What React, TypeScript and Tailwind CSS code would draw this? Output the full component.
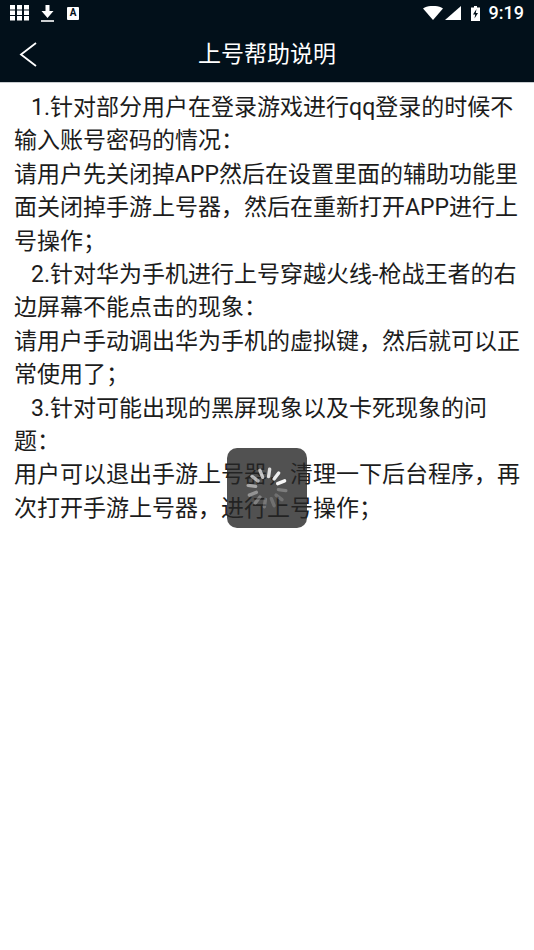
import React from 'react';

const paragraphs = [
  '\u00a0\u00a0\u00a01.针对部分用户在登录游戏进行qq登录的时候不输入账号密码的情况：',
  '请用户先关闭掉APP然后在设置里面的辅助功能里面关闭掉手游上号器，然后在重新打开APP进行上号操作；',
  '\u00a0\u00a0\u00a02.针对华为手机进行上号穿越火线-枪战王者的右边屏幕不能点击的现象：',
  '请用户手动调出华为手机的虚拟键，然后就可以正常使用了；',
  '\u00a0\u00a0\u00a03.针对可能出现的黑屏现象以及卡死现象的问题：',
  '用户可以退出手游上号器，清理一下后台程序，再次打开手游上号器，进行上号操作；',
];

// opacity per spoke, clockwise from 12 o'clock
const spokes = [0.8, 0.9, 0.95, 0.25, 0.18, 0.18, 0.22, 0.28, 0.38, 0.5, 0.6, 0.7];

function Spinner() {
  return (
    <svg width="44" height="44" viewBox="0 0 44 44">
      {spokes.map((o, i) => (
        <line
          key={i}
          x1="22"
          y1="3"
          x2="22"
          y2="10.500"
          stroke="white"
          strokeWidth="3.400"
          strokeLinecap="round"
          opacity={o}
          transform={`rotate(${i * 30 + 8} 22 22)`}
        />
      ))}
    </svg>
  );
}

function StatusBar() {
  return (
    <div className="h-7 flex items-center justify-between pl-[10px] pr-[10px] pb-[2px]">
      <div className="flex items-center gap-[12px]">
        <svg width="19" height="16" viewBox="0 0 19 16" fill="white">
          {[0, 7, 14].map((x) =>
            [0, 5.5, 11].map((y) => <rect key={`${x}-${y}`} x={x} y={y} width="5" height="4.500" />),
          )}
        </svg>
        <svg width="13" height="17" viewBox="0 0 13 17" fill="white">
          <path d="M4.500 0h4v6h4l-6 7-6-7h4z" />
          <rect x="0" y="15" width="13" height="2" opacity="0.8" />
        </svg>
        <div className="w-[12px] h-[13px] ml-[1px] bg-white rounded-[1px] flex items-center justify-center text-[10px] leading-none font-bold text-[#02101a]">
          A
        </div>
      </div>
      <div className="flex items-center text-white">
        <svg width="20" height="14" viewBox="0 0 20 14" fill="white" className="mr-[2px]">
          <path d="M0 2.500C5.500-1 14.500-1 20 2.500L10 14z" />
        </svg>
        <svg width="16" height="14" viewBox="0 0 16 14" fill="white" className="mr-[10px]">
          <path d="M16 0v14H0z" />
        </svg>
        <svg width="9" height="15" viewBox="0 0 9 15" className="mr-[9px]">
          <path d="M3 0h3v1.500h3V15H0V1.500h3z" fill="white" />
          <path d="M5.500 3 2 8.500h2.200L3.500 12.500 7 7H4.800z" fill="#02101a" />
        </svg>
        <span className="text-[18px] leading-none font-medium font-['Roboto',sans-serif]">9:19</span>
      </div>
    </div>
  );
}

export default function App() {
  return (
    <div className="relative min-h-[950px] bg-white font-['Roboto','Noto_Sans_CJK_SC',sans-serif]">
      <div className="bg-[#02101a] h-[83px] border-b border-[#c9cdd0]">
        <StatusBar />
        <div className="relative h-[54px] flex items-center justify-center">
          <svg
            width="18"
            height="25"
            viewBox="0 0 18 25"
            fill="none"
            stroke="white"
            strokeWidth="1.800"
            className="absolute left-[19px] top-[14px]"
          >
            <path d="M17 1 2 12.500 17 24" />
          </svg>
          <span className="text-white text-[23px]">上号帮助说明</span>
        </div>
      </div>
      <div className="px-[14px] pt-[8px] text-[23px] leading-[33.4px] text-[#1c1c1c]">
        {paragraphs.map((p, i) => (
          <p key={i}>{p}</p>
        ))}
      </div>
      <div className="absolute left-[227px] top-[448px] w-[80px] h-[80px] rounded-[10px] bg-[#262626]/80 flex items-center justify-center">
        <Spinner />
      </div>
    </div>
  );
}
